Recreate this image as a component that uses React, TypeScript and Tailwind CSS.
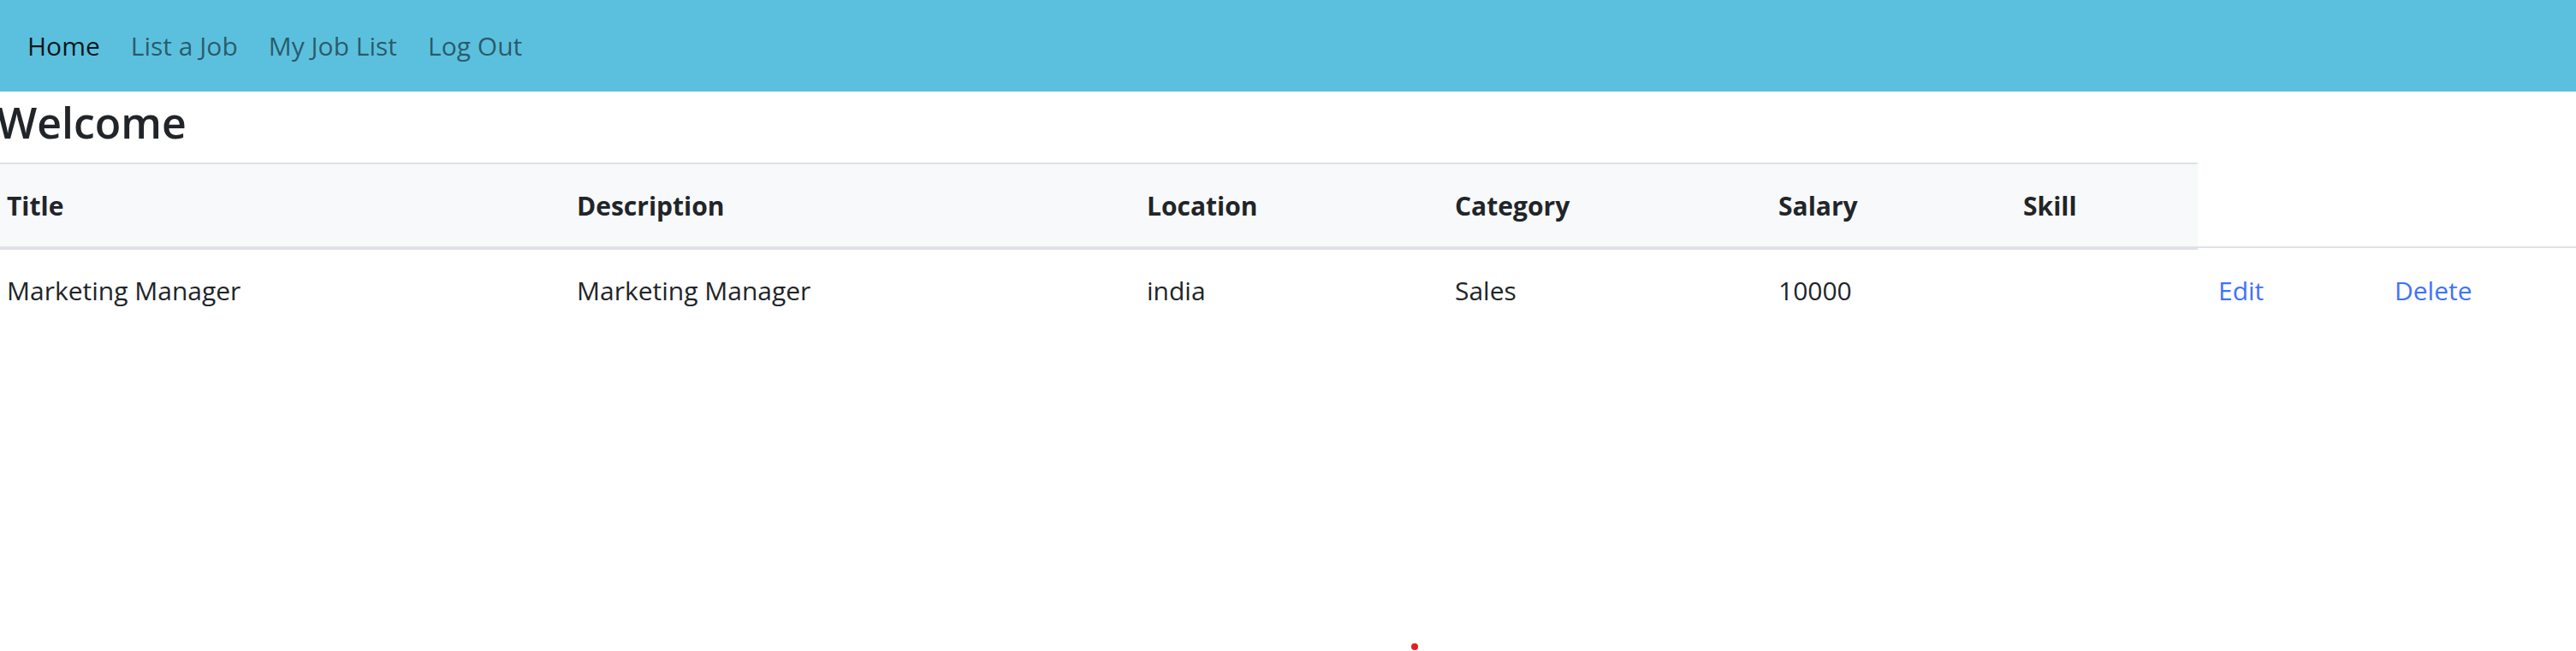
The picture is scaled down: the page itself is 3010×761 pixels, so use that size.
import React from "react";

const navLinks = [
  { label: "Home", active: true },
  { label: "List a Job", active: false },
  { label: "My Job List", active: false },
  { label: "Log Out", active: false },
];

const headers = ["Title", "Description", "Location", "Category", "Salary", "Skill"];

const jobs = [
  {
    title: "Marketing Manager",
    description: "Marketing Manager",
    location: "india",
    category: "Sales",
    salary: "10000",
    skill: "",
  },
];

export default function App() {
  return (
    <div className="relative min-h-[761px] bg-white font-['Open_Sans',sans-serif] text-[#212529] overflow-hidden">
      {/* Navbar */}
      <nav className="h-[107px] bg-[#5bc0de] flex items-center gap-[36px] pl-[32px]">
        {navLinks.map((link) => (
          <a
            key={link.label}
            href="#"
            className={`text-[30px] leading-none ${
              link.active ? "text-black/90" : "text-black/55"
            }`}
          >
            {link.label}
          </a>
        ))}
      </nav>

      {/* Heading */}
      <h3 className="text-[50px] leading-[64px] font-semibold -ml-[4px] mt-[4px] mb-[15px]">
        Welcome
      </h3>

      {/* Table */}
      <div className="grid grid-cols-[650px_666px_360px_378px_286px_228px_206px_1fr] text-[30px]">
        {headers.map((h, i) => (
          <div
            key={h}
            className={`bg-[#f8f9fa] border-t-2 border-b-4 border-[#dee2e6] h-[102px] flex items-center font-bold ${
              i === 0 ? "pl-[8px]" : "pl-[24px]"
            }`}
          >
            {h}
          </div>
        ))}
        {/* no header cells for the action columns */}
        <div className="col-span-2 flex flex-col justify-end">
          <div className="h-[4px] border-t-2 border-[#dee2e6]" />
        </div>

        {jobs.map((job) => (
          <React.Fragment key={job.title}>
            <div className="pl-[8px] h-[94px] flex items-center">{job.title}</div>
            <div className="pl-[24px] h-[94px] flex items-center">{job.description}</div>
            <div className="pl-[24px] h-[94px] flex items-center">{job.location}</div>
            <div className="pl-[24px] h-[94px] flex items-center">{job.category}</div>
            <div className="pl-[24px] h-[94px] flex items-center">{job.salary}</div>
            <div className="pl-[24px] h-[94px] flex items-center">{job.skill}</div>
            <div className="pl-[24px] h-[94px] flex items-center">
              <a href="#" className="text-[#3f72fc]">Edit</a>
            </div>
            <div className="pl-[24px] h-[94px] flex items-center">
              <a href="#" className="text-[#3f72fc]">Delete</a>
            </div>
          </React.Fragment>
        ))}
      </div>

      {/* stray red dot */}
      <div className="absolute left-[1649px] top-[752px] w-[8px] h-[8px] rounded-full bg-[#e02020]" />
    </div>
  );
}
